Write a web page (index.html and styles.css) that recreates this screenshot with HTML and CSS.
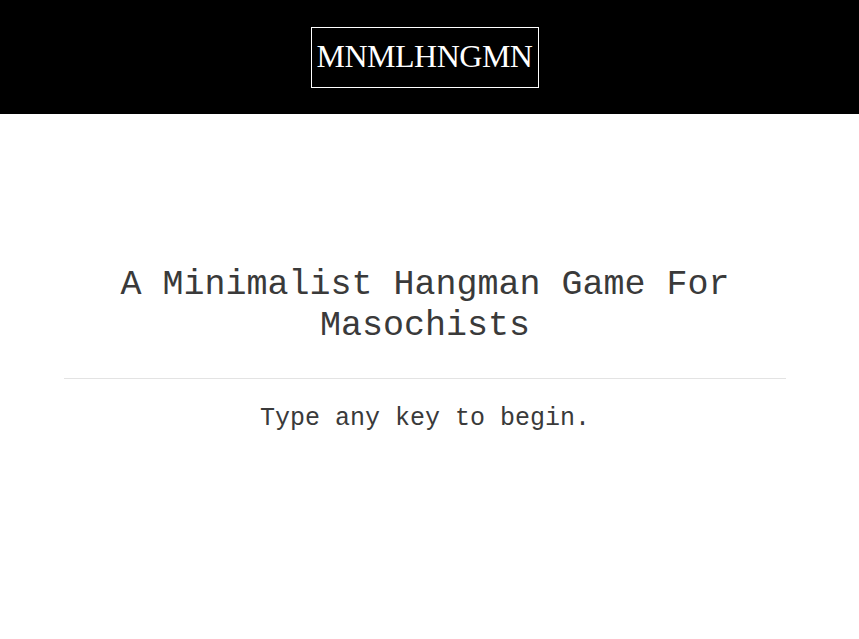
FILE: index.html
```html
<!DOCTYPE html>
<html>
<head>
<meta charset="utf-8">
<title>MNMLHNGMN</title>
<link rel="stylesheet" href="styles.css">
</head>
<body>
<header class="top">
  <div class="logo">MNMLHNGMN</div>
</header>
<main class="main">
  <h1 class="title">A Minimalist Hangman Game For Masochists</h1>
  <hr class="rule">
  <p class="prompt">Type any key to begin.</p>
</main>
</body>
</html>
```
FILE: styles.css
```css
html, body {
  margin: 0;
  padding: 0;
  background: #fff;
}
.top {
  background: #000;
  height: 114px;
  display: flex;
  align-items: center;
  justify-content: center;
  padding-right: 9px;
}
.logo {
  border: 1px solid #fff;
  color: #fff;
  font-family: "Liberation Serif", "Times New Roman", serif;
  font-size: 32px;
  line-height: 57px;
  padding: 0 6px 2px 5px;
  letter-spacing: -0.5px;
}
.main {
  padding: 151px 73px 0 64px;
  text-align: center;
  font-family: "Liberation Mono", "Courier New", monospace;
  color: #3a3a3a;
}
.title {
  margin: 0;
  font-weight: normal;
  font-size: 35px;
  line-height: 41px;
  padding: 0 40px;
}
.rule {
  border: 0;
  border-top: 1px solid #e3e3e3;
  margin: 31px 0 23px;
}
.prompt {
  margin: 0;
  font-size: 25px;
  line-height: 34px;
}
```
